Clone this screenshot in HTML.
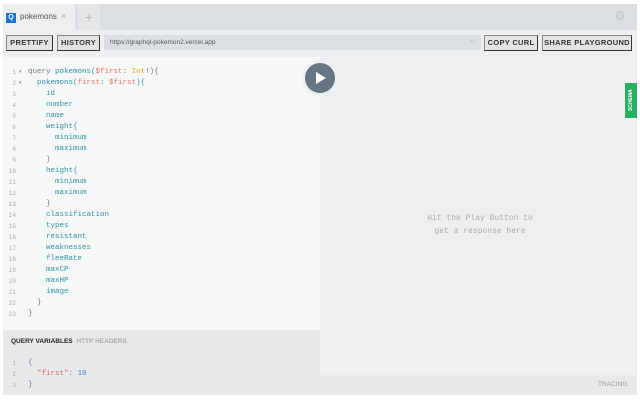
<!DOCTYPE html><html><head><style>
*{margin:0;padding:0;box-sizing:border-box}
body{width:640px;height:400px;background:#fff;position:relative;overflow:hidden;font-family:"Liberation Sans",sans-serif}
.a{position:absolute}
.btn{position:absolute;top:35px;height:16px;background:#e2e4e6;border:1px solid #333;border-top-color:#888;border-left-color:#888;font-size:7.5px;font-weight:bold;color:#333;text-align:center;line-height:14px;letter-spacing:.3px}
.code{position:absolute;font-family:"Liberation Mono",monospace;font-size:7.5px;line-height:11px;white-space:pre;color:#2b93a6}
.ln{position:absolute;font-family:"Liberation Mono",monospace;font-size:6px;line-height:11px;color:#aaa;text-align:right;width:12px;white-space:pre}
.k{color:#6d7780}.v{color:#e0736b}.t{color:#f29b2b}.s{color:#d8645a}.n{color:#2f83d8}
</style></head><body>
<div class="a" style="left:3px;top:4px;width:634px;height:26px;background:#dcdfe2"></div>
<div class="a" style="left:3px;top:4px;width:72px;height:26px;background:#eeeff0"></div>
<div class="a" style="left:6px;top:13px;width:10px;height:10px;background:#1f74d0;color:#fff;font-size:7px;font-weight:bold;text-align:center;line-height:10px">Q</div>
<div class="a" style="left:20px;top:12px;font-size:8px;color:#555">pokemons</div>
<div class="a" style="left:61px;top:11px;font-size:9px;color:#aaa">×</div>
<div class="a" style="left:78px;top:4px;width:22px;height:26px;background:#e4e6e8;color:#bbb;font-size:14px;text-align:center;line-height:26px">+</div>
<div class="a" style="left:614px;top:8px;font-size:13px;color:#c4c7ca">⚙</div>
<div class="a" style="left:3px;top:30px;width:634px;height:27px;background:#eceef0"></div>
<div class="btn" style="left:6px;width:47px">PRETTIFY</div>
<div class="btn" style="left:57px;width:43px">HISTORY</div>
<div class="a" style="left:104px;top:35px;width:377px;height:15px;background:#dcdfe2;font-size:6.5px;color:#555;line-height:15px;padding-left:6px">https://graphql-pokemon2.vercel.app<span style="position:absolute;right:6px;color:#bbb">⟲</span></div>
<div class="btn" style="left:484px;width:54px">COPY CURL</div>
<div class="btn" style="left:542px;width:90px">SHARE PLAYGROUND</div>
<div class="a" style="left:3px;top:57px;width:317px;height:273px;background:#f6f7f7"></div>
<div class="a" style="left:320px;top:57px;width:317px;height:318px;background:#eeeff1"></div>
<div class="a" style="left:3px;top:330px;width:317px;height:65px;background:#e8e9ea"></div>
<div class="a" style="left:320px;top:375px;width:317px;height:20px;background:#e8e9ea"></div>
<div class="a" style="left:598px;top:381px;font-size:6.5px;color:#999">TRACING</div>
<div class="a" style="left:625px;top:83px;width:12px;height:35px;background:#27ae60"></div>
<div class="a" style="left:625px;top:83px;width:12px;height:35px;color:#fff;font-size:5px;font-weight:bold;writing-mode:vertical-rl;transform:rotate(180deg);text-align:center;line-height:12px">SCHEMA</div>
<div class="a" style="left:305px;top:63px;width:30px;height:30px;border-radius:50%;background:#677684;box-shadow:0 0 0 3px #eef0f1"></div>
<svg class="a" style="left:313px;top:71px" width="14" height="14"><path d="M3 1 L13 7 L3 13 Z" fill="#fff"/></svg>
<div class="a" style="left:400px;top:212px;width:160px;text-align:center;font-family:'Liberation Mono',monospace;font-size:8px;line-height:13px;color:#aaa">Hit the Play Button to<br>get a response here</div>
<div class="ln" style="left:4px;top:67px">1
2
3
4
5
6
7
8
9
10
11
12
13
14
15
16
17
18
19
20
21
22
23</div>
<div class="a" style="left:19px;top:67px;font-size:5px;line-height:11px;color:#888">▾<br>▾</div>
<div class="code" style="left:28px;top:67px"><span class="k">query</span> pokemons(<span class="v">$first</span>: <span class="t">Int</span><span class="k">!){</span>
  pokemons(<span class="v">first</span>: <span class="v">$first</span>){
    id
    number
    name
    weight{
      minimum
      maximum
    <span class="k">}</span>
    height{
      minimum
      maximum
    <span class="k">}</span>
    classification
    types
    resistant
    weaknesses
    fleeRate
    maxCP
    maxHP
    image
  <span class="k">}</span>
<span class="k">}</span></div>
<div class="a" style="left:11px;top:338px;font-size:6.5px;font-weight:bold;color:#222">QUERY VARIABLES <span style="color:#aaa;margin-left:2px">HTTP HEADERS</span></div>
<div class="ln" style="left:4px;top:358px">1
2
3</div>
<div class="code" style="left:28px;top:358px"><span class="k">{</span>
  <span class="s">"first"</span><span class="k">:</span> <span class="n">10</span>
<span class="k">}</span></div>
</body></html>
